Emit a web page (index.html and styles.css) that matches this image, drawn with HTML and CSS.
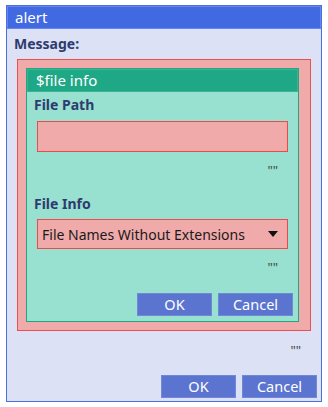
FILE: index.html
```html
<!DOCTYPE html>
<html>
<head>
<meta charset="utf-8">
<link rel="stylesheet" href="styles.css">
</head>
<body>
<div class="window">
  <div class="titlebar">alert</div>
  <div class="content">
    <div class="label msg">Message:</div>
    <div class="pink">
      <div class="dialog">
        <div class="dhead">$file info</div>
        <div class="dbody">
          <div class="label">File Path</div>
          <div class="input"></div>
          <div class="quote">""</div>
          <div class="label info">File Info</div>
          <div class="select"><span>File Names Without Extensions</span><span class="arrow"></span></div>
          <div class="quote">""</div>
          <div class="buttons">
            <div class="btn">OK</div>
            <div class="btn">Cancel</div>
          </div>
        </div>
      </div>
    </div>
    <div class="quote outer">""</div>
    <div class="buttons outerbtns">
      <div class="btn">OK</div>
      <div class="btn">Cancel</div>
    </div>
  </div>
</div>
</body>
</html>
```

FILE: styles.css
```css
* { box-sizing: border-box; }
body {
  margin: 0;
  padding: 5px 6px 0 6px;
  font-family: "Noto Sans", "Open Sans", sans-serif;
  background: #ffffff;
}
.window {
  width: 316px;
  height: 397px;
  border: 1px solid #4a6fe3;
  background: #dce1f5;
  display: flex;
  flex-direction: column;
}
.titlebar {
  height: 23px;
  background: #4169e1;
  border: 1px solid #6586ec;
  color: #ffffff;
  font-size: 15px;
  line-height: 20px;
  padding-left: 7px;
}
.content {
  flex: 1;
  display: flex;
  flex-direction: column;
  padding: 6px 10px 0 10px;
}
.label {
  font-weight: bold;
  color: #2f3b6e;
  font-size: 14px;
  line-height: 18px;
}
.msg { margin-left: -3px; }
.pink {
  margin-top: 6px;
  background: #f0aaaa;
  border: 1px solid #e9504f;
  padding: 8px 11px 8px 8px;
}
.dialog {
  border: 1px solid #22a683;
  background: #98e0d0;
}
.dhead {
  height: 23px;
  background: #1ea886;
  border: 1px solid #3ab393;
  color: #ffffff;
  font-size: 15px;
  line-height: 20px;
  padding-left: 8px;
}
.dbody {
  padding: 4px 7px 5px 7px;
  display: flex;
  flex-direction: column;
}
.input {
  margin: 7px 3px 0 3px;
  height: 31px;
  background: #f0aaaa;
  border: 1.5px solid #ec4b4b;
}
.quote {
  align-self: flex-end;
  margin-right: 13px;
  font-size: 13px;
  line-height: 14px;
  color: #3f4a3a;
  margin-top: 11px;
}
.info { margin-top: 18px; }
.select {
  margin: 6px 3px 0 3px;
  height: 30px;
  background: #f0aaaa;
  border: 1.5px solid #ec4b4b;
  display: flex;
  align-items: center;
  justify-content: space-between;
  padding: 0 9px 0 4px;
  font-size: 14px;
  color: #1a1a1a;
}
.arrow {
  width: 0; height: 0;
  border-left: 5px solid transparent;
  border-right: 5px solid transparent;
  border-top: 6px solid #111111;
}
.buttons {
  display: flex;
  justify-content: flex-end;
  gap: 6px;
  margin-top: 19px;
}
.dbody .buttons { margin-right: -2px; }
.btn {
  width: 75px;
  height: 23px;
  background: #5b74cf;
  border: 1px solid #7088d8;
  color: #ffffff;
  font-size: 14.5px;
  line-height: 20px;
  text-align: center;
}
.outer { margin-top: 12px; margin-right: 10px; }
.outerbtns { margin-top: 18px; margin-right: -6px; }
```
